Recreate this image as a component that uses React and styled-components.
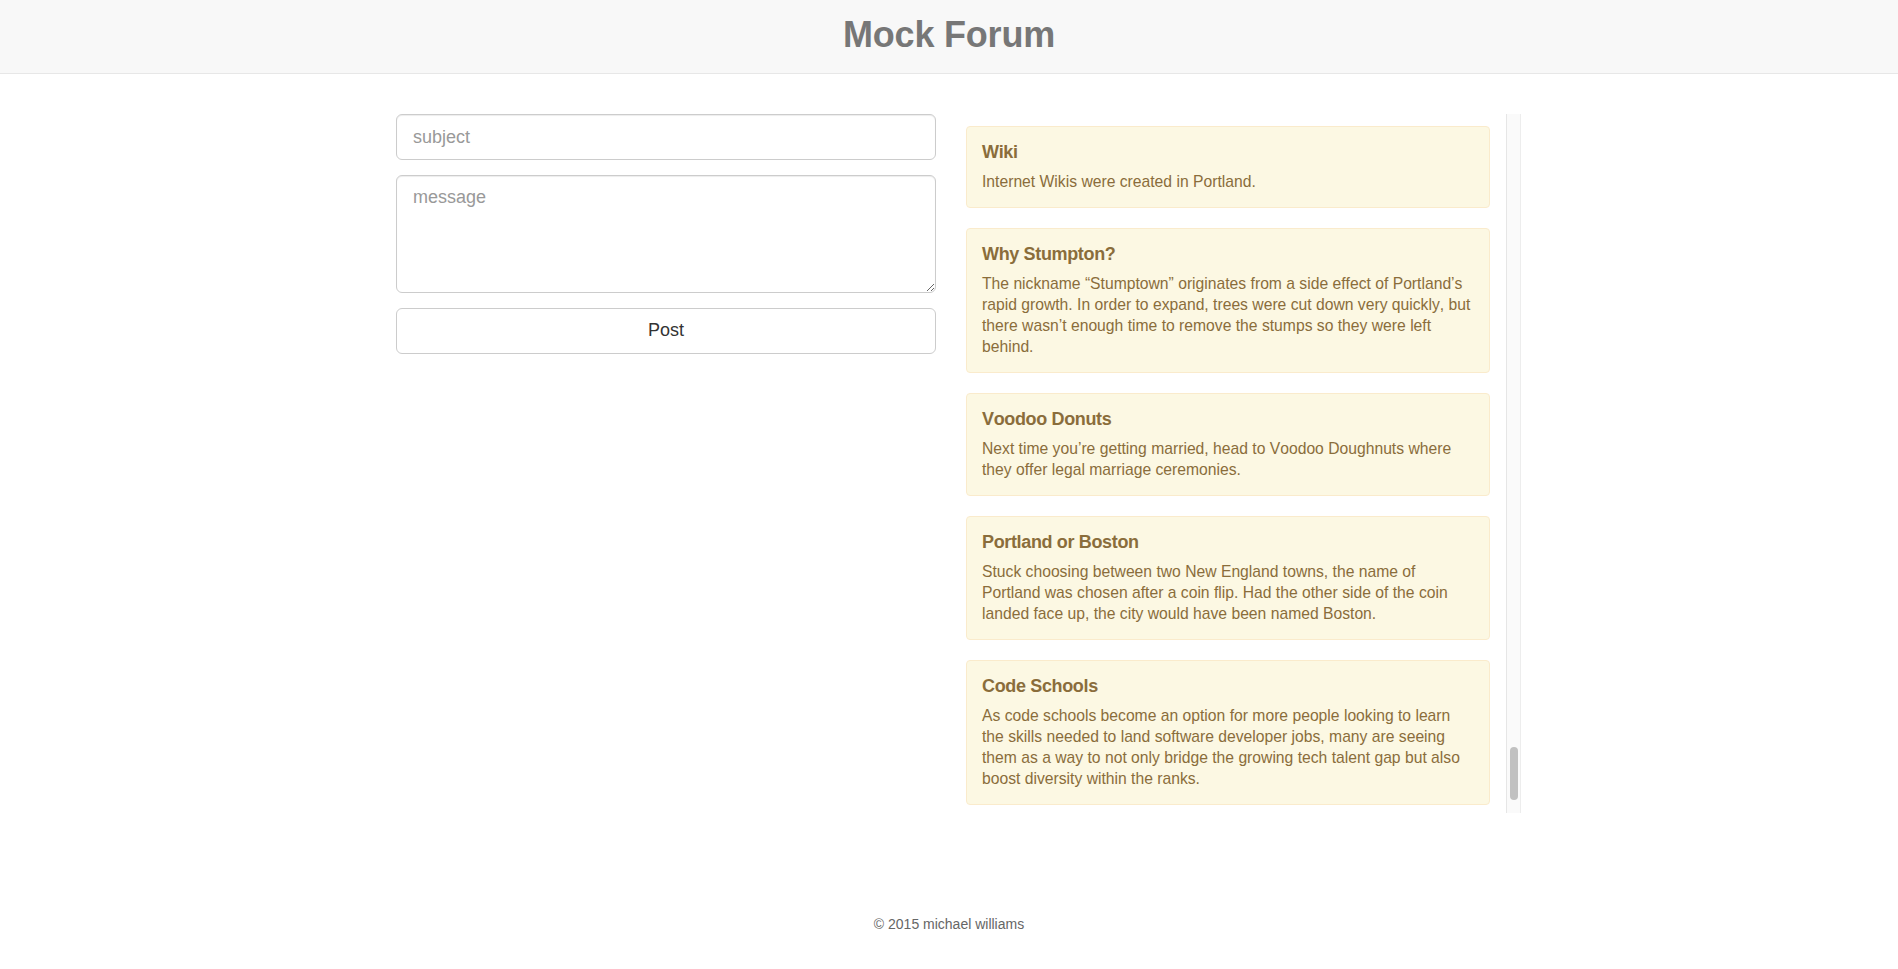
import React, { useLayoutEffect, useRef, useState, useCallback } from "react";
import styled, { createGlobalStyle } from "styled-components";

const GlobalStyle = createGlobalStyle`
  html, body { margin: 0; padding: 0; background: #fff; }
  body {
    font-family: "Liberation Sans", Helvetica, Arial, sans-serif;
    font-size: 14px;
    line-height: 1.42857;
    color: #333;
    font-kerning: none;
  }
  *, *::before, *::after { box-sizing: border-box; }
`;

const Header = styled.header`
  height: 74px;
  background: #f8f8f8;
  border-bottom: 1px solid #e7e7e7;
  display: flex;
  justify-content: center;
`;

const Title = styled.h1`
  margin: 0;
  font-size: 36px;
  line-height: 69px;
  font-weight: 700;
  letter-spacing: -0.2px;
  color: #777;
`;

const Main = styled.main`
  width: 1140px;
  margin: 40px 0 0 calc(50% - 553px);
  display: grid;
  grid-template-columns: 540px 570px;
  column-gap: 30px;
`;

const FormColumn = styled.form`
  display: flex;
  flex-direction: column;
  gap: 15px;
`;

const fieldBase = `
  width: 100%;
  padding: 10px 16px;
  font-family: inherit;
  font-size: 18px;
  line-height: 1.3333;
  color: #555;
  background: #fff;
  border: 1px solid #ccc;
  border-radius: 6px;
  box-shadow: inset 0 1px 1px rgba(0, 0, 0, 0.075);
  outline: none;
  &::placeholder { color: #999; }
`;

const SubjectInput = styled.input`
  ${fieldBase}
  height: 46px;
  display: block;
`;

const MessageArea = styled.textarea`
  ${fieldBase}
  height: 118px;
  display: block;
  resize: vertical;
`;

const PostButton = styled.button`
  height: 46px;
  width: 100%;
  font-family: inherit;
  font-size: 18px;
  line-height: 1.3333;
  color: #333;
  background: #fff;
  border: 1px solid #ccc;
  border-radius: 6px;
  cursor: pointer;
`;

const FeedColumn = styled.section`
  padding-right: 15px;
`;

const FeedFrame = styled.div`
  height: 699px;
  display: flex;
`;

const Feed = styled.div`
  flex: 1;
  min-width: 0;
  overflow-y: scroll;
  scrollbar-width: none;
  padding: 0 16px 20px 0;
  display: flex;
  flex-direction: column;
  gap: 20px;
  &::-webkit-scrollbar { display: none; }
`;

const ScrollTrack = styled.div`
  position: relative;
  flex: none;
  width: 15px;
  background: #fafafa;
  border-left: 1px solid #e6e6e6;
  border-right: 1px solid #ededed;
`;

const ScrollThumb = styled.div`
  position: absolute;
  left: 3px;
  width: 8px;
  border-radius: 4px;
  background: #c1c1c1;
`;

const Alert = styled.article`
  flex: none;
  padding: 15px;
  background: #fcf8e3;
  border: 1px solid #faebcc;
  border-radius: 4px;
  color: #8a6d3b;
`;

const PostTitle = styled.h4`
  margin: 0 0 9px;
  font-size: 18px;
  line-height: 20px;
  font-weight: 700;
  letter-spacing: -0.35px;
  color: inherit;
`;

const PostBody = styled.p`
  margin: 0;
  font-size: 15.7px;
  line-height: 21px;
`;

const Footer = styled.footer`
  margin-top: 101px;
  text-align: center;
  font-size: 14px;
  line-height: 20px;
  color: #666;
`;

const posts = [
  { title: "Wiki", body: "Internet Wikis were created in Portland." },
  {
    title: "Why Stumpton?",
    body:
      "The nickname \u201CStumptown\u201D originates from a side effect of Portland\u2019s rapid growth. In order to expand, trees were cut down very quickly, but there wasn\u2019t enough time to remove the stumps so they were left behind.",
  },
  {
    title: "Voodoo Donuts",
    body:
      "Next time you\u2019re getting married, head to Voodoo Doughnuts where they offer legal marriage ceremonies.",
  },
  {
    title: "Portland or Boston",
    body:
      "Stuck choosing between two New England towns, the name of Portland was chosen after a coin flip. Had the other side of the coin landed face up, the city would have been named Boston.",
  },
  {
    title: "Code Schools",
    body:
      "As code schools become an option for more people looking to learn the skills needed to land software developer jobs, many are seeing them as a way to not only bridge the growing tech talent gap but also boost diversity within the ranks.",
  },
];

const allPosts = Array.from({ length: 13 }, () => posts).flat();

const TRACK_INSET_TOP = 2;
const TRACK_INSET_BOTTOM = 12;

export default function App() {
  const feedRef = useRef(null);
  const [thumb, setThumb] = useState({ top: 0, height: 0 });

  const updateThumb = useCallback(() => {
    const el = feedRef.current;
    if (!el) return;
    const trackH = el.clientHeight - TRACK_INSET_TOP - TRACK_INSET_BOTTOM;
    const height = Math.max(24, (el.clientHeight / el.scrollHeight) * trackH);
    const maxScroll = el.scrollHeight - el.clientHeight;
    const frac = maxScroll > 0 ? el.scrollTop / maxScroll : 0;
    setThumb({ top: TRACK_INSET_TOP + frac * (trackH - height), height });
  }, []);

  useLayoutEffect(() => {
    const el = feedRef.current;
    if (el) el.scrollTop = el.scrollHeight - el.clientHeight - 12;
    updateThumb();
  }, [updateThumb]);

  return (
    <>
      <GlobalStyle />
      <Header>
        <Title>Mock Forum</Title>
      </Header>
      <Main>
        <FormColumn onSubmit={(e) => e.preventDefault()}>
          <SubjectInput type="text" placeholder="subject" />
          <MessageArea rows={4} placeholder="message" />
          <PostButton type="submit">Post</PostButton>
        </FormColumn>
        <FeedColumn>
          <FeedFrame>
            <Feed ref={feedRef} onScroll={updateThumb}>
              {allPosts.map((p, i) => (
                <Alert key={i}>
                  <PostTitle>{p.title}</PostTitle>
                  <PostBody>{p.body}</PostBody>
                </Alert>
              ))}
            </Feed>
            <ScrollTrack>
              <ScrollThumb style={{ top: thumb.top, height: thumb.height }} />
            </ScrollTrack>
          </FeedFrame>
        </FeedColumn>
      </Main>
      <Footer>&copy; 2015 michael williams</Footer>
    </>
  );
}
